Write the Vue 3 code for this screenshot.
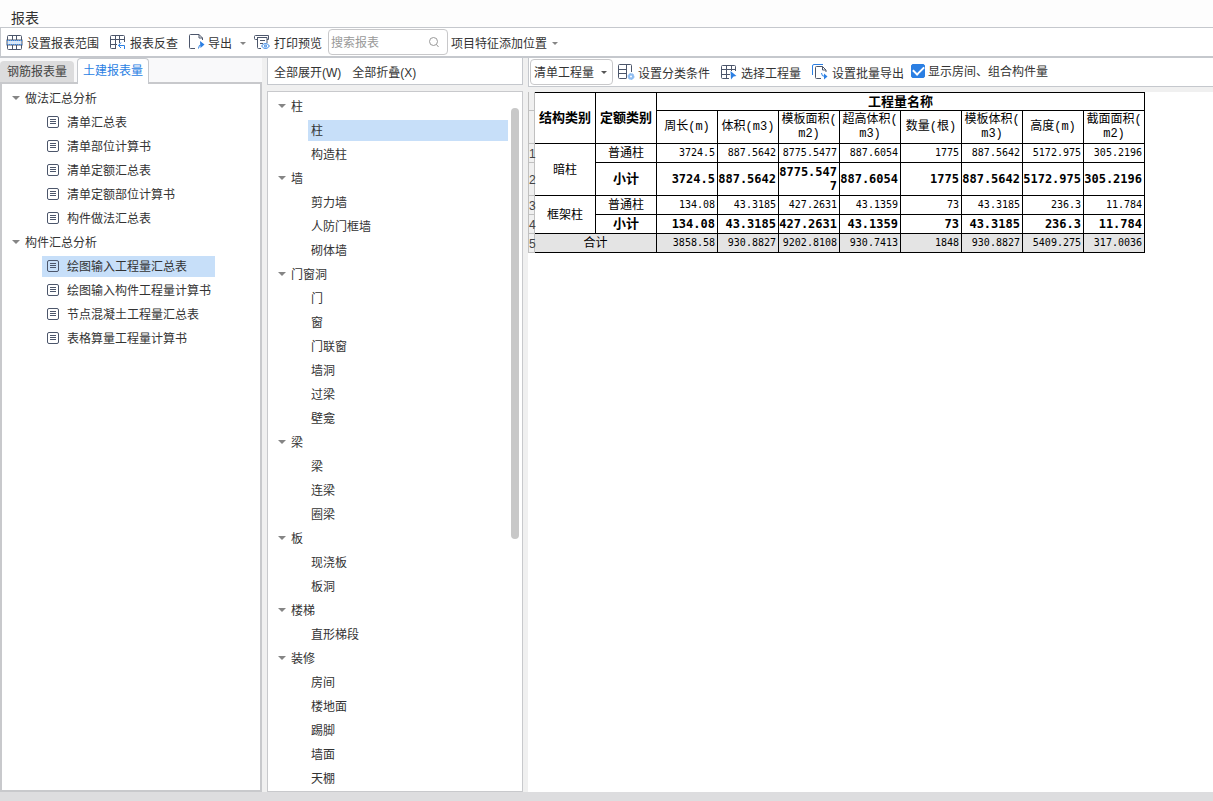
<script setup>
import { ref } from 'vue'

const reports = [
  { name: '做法汇总分析', items: ['清单汇总表', '清单部位计算书', '清单定额汇总表', '清单定额部位计算书', '构件做法汇总表'] },
  { name: '构件汇总分析', items: ['绘图输入工程量汇总表', '绘图输入构件工程量计算书', '节点混凝土工程量汇总表', '表格算量工程量计算书'] },
]
const components = [
  { name: '柱', items: ['柱', '构造柱'] },
  { name: '墙', items: ['剪力墙', '人防门框墙', '砌体墙'] },
  { name: '门窗洞', items: ['门', '窗', '门联窗', '墙洞', '过梁', '壁龛'] },
  { name: '梁', items: ['梁', '连梁', '圈梁'] },
  { name: '板', items: ['现浇板', '板洞'] },
  { name: '楼梯', items: ['直形梯段'] },
  { name: '装修', items: ['房间', '楼地面', '踢脚', '墙面', '天棚'] },
]
const activeReport = ref('绘图输入工程量汇总表')
const activeComponent = ref('柱/柱')
const keyword = ref('')
const showRooms = ref(true)

const columns = ['周长(m)', '体积(m3)', '模板面积(\nm2)', '超高体积(\nm3)', '数量(根)', '模板体积(\nm3)', '高度(m)', '截面面积(\nm2)']
const rows = [
  { group: '暗柱', kind: '普通柱', values: ['3724.5', '887.5642', '8775.5477', '887.6054', '1775', '887.5642', '5172.975', '305.2196'] },
  { kind: '小计', sub: true, tall: true, values: ['3724.5', '887.5642', '8775.5477', '887.6054', '1775', '887.5642', '5172.975', '305.2196'] },
  { group: '框架柱', kind: '普通柱', values: ['134.08', '43.3185', '427.2631', '43.1359', '73', '43.3185', '236.3', '11.784'] },
  { kind: '小计', sub: true, values: ['134.08', '43.3185', '427.2631', '43.1359', '73', '43.3185', '236.3', '11.784'] },
  { total: '合计', values: ['3858.58', '930.8827', '9202.8108', '930.7413', '1848', '930.8827', '5409.275', '317.0036'] },
]
</script>

<template>
  <div class="window">
    <header class="titlebar">报表</header>

    <div class="toolbar">
      <button class="tool range">
        <svg class="icon" viewBox="0 0 16 16"><rect x="1" y="6" width="15" height="5" fill="#d6e8fb" /><path d="M1.500 6V2.500Q1.500 1.500 2.500 1.500H14.500Q15.500 1.500 15.500 2.500V6M1.500 11V14.500Q1.500 15.500 2.500 15.500H14.500Q15.500 15.500 15.500 14.500V11M6.500 1.500V6M10.500 1.500V6M6.500 11V15.500M10.500 11V15.500" /><path class="blue" stroke-dasharray="1 1" d="M1 6.500H16M1 10.500H16" /></svg>
        <span>设置报表范围</span>
      </button>
      <button class="tool trace">
        <svg class="icon" viewBox="0 0 16 16"><path d="M15.500 8V2.500Q15.500 1.500 14.500 1.500H2.500Q1.500 1.500 1.500 2.500V13.500Q1.500 14.500 2.500 14.500H7M1.500 5.500H15.500M1.500 10.500H8M6.500 1.500V14.500M10.500 1.500V9" /><path class="blue" d="M15.500 15V11.500H9.500M12 8.500L9.500 11.500L12 14" /></svg>
        <span>报表反查</span>
      </button>
      <button class="tool export">
        <svg class="icon" viewBox="0 0 16 16"><path d="M7 14.500H2.500Q1.500 14.500 1.500 13.500V1.500Q1.500 .5 2.500 .5H11L14.500 4V6M11 .5V4H14.500" /><path class="blue" d="M10.500 14.500Q10.500 10.500 14 10.500" /><path class="solid" d="M12 7L16.500 10.500L12.500 14Z" /></svg>
        <span>导出</span>
        <i class="caret small"></i>
      </button>
      <button class="tool preview">
        <svg class="icon" viewBox="0 0 16 16"><path d="M3 5.500H1.500Q.5 5.500 .5 4.500V2.500Q.5 1.500 1.500 1.500H14.500V5.500H13M3 3.500H13V9M3.500 3.500V13.500Q3.500 14.500 4.500 14.500H7M6 6.500H11M6 9.500H9" /><path class="blue" d="M7.500 12Q11.500 7 15.500 12Q11.500 17 7.500 12Z" /><circle class="blue" cx="11.500" cy="12" r="1" /></svg>
        <span>打印预览</span>
      </button>
      <label class="search">
        <input v-model="keyword" type="text" placeholder="搜索报表" aria-label="搜索报表" />
        <svg viewBox="0 0 12 12"><circle cx="5.500" cy="5.500" r="4" /><path d="M8.500 8.500L10.500 11" /></svg>
      </label>
      <button class="tool place"><span>项目特征添加位置</span><i class="caret small"></i></button>
    </div>

    <main class="body">
      <section class="left">
        <div class="tabs" role="tablist">
          <button role="tab" aria-selected="false" class="tab">钢筋报表量</button>
          <button role="tab" aria-selected="true" class="tab active">土建报表量</button>
        </div>
        <nav class="reports">
          <template v-for="g in reports" :key="g.name">
            <button class="node"><i class="caret"></i>{{ g.name }}</button>
            <button v-for="r in g.items" :key="r" class="leaf" :class="{ selected: r === activeReport }" @click="activeReport = r">
              <svg viewBox="0 0 12 12"><rect x=".5" y=".5" width="11" height="11" rx="1.500" /><path d="M3 3.500H9M3 5.500H9M3 7.500H9" /></svg>
              <span>{{ r }}</span>
            </button>
          </template>
        </nav>
      </section>

      <section class="middle">
        <div class="fold">
          <button>全部展开(W)</button>
          <button>全部折叠(X)</button>
        </div>
        <nav class="components">
          <template v-for="g in components" :key="g.name">
            <button class="node"><i class="caret"></i>{{ g.name }}</button>
            <button v-for="c in g.items" :key="c" class="leaf" :class="{ selected: g.name + '/' + c === activeComponent }" @click="activeComponent = g.name + '/' + c">{{ c }}</button>
          </template>
          <div class="thumb"></div>
        </nav>
      </section>

      <section class="right">
        <div class="options">
          <div class="picker">
            <select aria-label="工程量类型"><option>清单工程量</option></select>
            <i class="caret small"></i>
          </div>
          <button class="tool">
            <svg class="icon" viewBox="0 0 16 16"><path d="M8 14.500H1.500Q.5 14.500 .5 13.500V1.500Q.5 .5 1.500 .5H12.500Q13.500 .5 13.500 1.500V8M.5 5.500H8M.5 9.500H8M8.500 .5V14.500" /><circle class="gear" cx="13" cy="12.500" r="3" /><circle class="hub" cx="13" cy="12.500" r="1" /></svg>
            <span>设置分类条件</span>
          </button>
          <button class="tool">
            <svg class="icon" viewBox="0 0 16 16"><path d="M14.500 7V2.500Q14.500 1.500 13.500 1.500H1.500Q.5 1.500 .5 2.500V13.500Q.5 14.500 1.500 14.500H8M.5 5.500H14.500M.5 10.500H9M5.500 1.500V14.500M10.500 1.500V7" /><path class="solid" d="M9.500 7L15.500 12L12.500 12.500L10 15.500Z" /></svg>
            <span>选择工程量</span>
          </button>
          <button class="tool">
            <svg class="icon" viewBox="0 0 16 16"><path class="blue" d="M.5 11V2Q.5 .5 2 .5H11" /><path d="M9 14.500H4.500Q3.500 14.500 3.500 13.500V3.500Q3.500 2.500 4.500 2.500H10.500L14 6V8M10.500 2.500V6H14" /><path class="blue" d="M9.500 9Q9.500 12.500 13 12.500" /><path class="solid" d="M12 9.500L15.500 12.500L12 15.500Z" /></svg>
            <span>设置批量导出</span>
          </button>
          <label class="check"><input v-model="showRooms" type="checkbox" /><span>显示房间、组合构件量</span></label>
        </div>

        <div class="viewport">
          <table class="sheet">
            <colgroup><col class="gutter" /><col v-for="n in 10" :key="n" class="cell" /></colgroup>
            <thead>
              <tr class="r19">
                <td class="num"></td>
                <th rowspan="2">结构类别</th>
                <th rowspan="2">定额类别</th>
                <th colspan="8">工程量名称</th>
              </tr>
              <tr class="r33">
                <td class="num"></td>
                <th v-for="c in columns" :key="c" class="unit">{{ c }}</th>
              </tr>
            </thead>
            <tbody>
              <tr v-for="(r, i) in rows" :key="i" :class="[r.tall ? 'r33' : 'r19', { sub: r.sub, total: r.total }]">
                <td class="num">{{ i + 1 }}</td>
                <td v-if="r.group" rowspan="2" class="name">{{ r.group }}</td>
                <td v-if="r.kind" class="name">{{ r.kind }}</td>
                <td v-if="r.total" colspan="2" class="name">{{ r.total }}</td>
                <td v-for="(v, j) in r.values" :key="j" class="val">{{ v }}</td>
              </tr>
            </tbody>
          </table>
        </div>
      </section>
    </main>
    <footer class="status"></footer>
  </div>
</template>

<style>
html, body { margin: 0; background: #fff; }
</style>

<style scoped>
* { box-sizing: border-box; }
.window {
  display: flex; flex-direction: column; min-height: 100vh;
  font: 12px/16px "Liberation Sans", "Noto Sans CJK SC", sans-serif; color: #333; background: #f0f0f0;
}
button { border: 0; background: none; padding: 0; margin: 0; font: inherit; color: inherit; text-align: left; white-space: nowrap; }
.titlebar { height: 28px; padding: 8px 0 0 11px; font-size: 14px; line-height: 20px; background: #fdfdfd; border-bottom: 1px solid #c5c8cd; }
.toolbar { display: flex; align-items: center; height: 30px; padding-left: 5px; background: #fff; border-left: 1px solid #c5c8cd; border-bottom: 2px solid #c5c8cd; }
.tool { display: flex; align-items: center; gap: 5px; flex: none; }
.tool span { padding-top: 3px; }
.toolbar .tool { margin-right: 10px; }
.toolbar .export { gap: 4px; margin-right: 8px; }
.toolbar .preview { gap: 4px; margin-right: 6px; }
.icon { width: 16px; height: 16px; fill: none; stroke: #4c566b; stroke-width: 1; overflow: visible; }
.icon .blue { stroke: #2b7fe3; }
.icon .solid { fill: #2b7fe3; stroke: none; }
.icon .gear { fill: #8fbcf0; stroke: #8fbcf0; stroke-dasharray: 2 1; }
.icon .hub { fill: #fff; stroke: none; }
.caret { display: block; width: 0; height: 0; border: solid transparent; border-width: 4px 4px 0; border-top-color: #858585; flex: none; }
.caret.small { border-width: 3px 3px 0; border-top-color: #858585; margin: 2px 0 0 4px; }
.search { display: flex; align-items: center; width: 120px; height: 26px; padding: 0 7px 0 2px; border: 1px solid #c8c8ca; border-radius: 4px; background: #fff; margin-right: 3px; flex: none; }
.search input { flex: 1; min-width: 0; border: 0; outline: 0; padding: 2px 0 0; font: inherit; background: none; color: #333; }
.search input::placeholder { color: #999; opacity: 1; }
.search svg { width: 12px; height: 12px; fill: none; stroke: #999; }
.toolbar .place { gap: 1px; margin: 0; }

.body { flex: 1; display: flex; gap: 5px; }
.left { width: 262px; flex: none; display: flex; flex-direction: column; background: #f9f9fa; }
.tabs { display: flex; align-items: flex-end; gap: 3px; height: 24px; }
.tab { height: 21px; width: 74px; text-align: center; background: #dcdcdd; border-radius: 4px 4px 0 0; color: #444; }
.tab.active { height: 26px; width: 72px; margin-bottom: -2px; padding-bottom: 1px; background: #fff; border: 1px solid #c5c8cd; border-bottom: 0; color: #2b7fe3; z-index: 1; }
.reports, .components { display: flex; flex-direction: column; align-items: flex-start; flex: 1; background: #fff; }
.reports { padding-top: 2px; border: 2px solid #c8c9cc; }
.node { display: flex; align-items: center; height: 24px; flex: none; gap: 5px; padding-top: 2px; }
.node .caret { margin-bottom: 2px; }
.leaf { flex: none; height: 21px; margin: 2px 0 1px 40px; padding-top: 1px; }
.reports .node { padding-left: 10px; }
.reports .leaf { display: flex; align-items: center; gap: 8px; padding-left: 5px; padding-right: 4px; }
.reports .leaf.selected { padding-right: 28px; }
.reports .leaf svg { width: 12px; height: 12px; margin-bottom: 3px; fill: none; stroke: #4c566b; }
.selected { background: #c7dff9; }

.middle { width: 256px; flex: none; display: flex; flex-direction: column; gap: 6px; }
.fold { display: flex; gap: 11px; height: 27px; padding: 0 6px; background: #fff; border: 1px solid #c5c8cd; border-top: 0; }
.fold button { padding-top: 3px; }
.components { position: relative; padding-top: 2px; border: 1px solid #c8c9cc; }
.components .node { padding-left: 10px; }
.components .leaf { width: 200px; padding-left: 3px; }
.thumb { position: absolute; right: 3px; top: 16px; width: 8px; height: 431px; border-radius: 4px; background: #c8c8c8; }

.right { flex: 1; min-width: 0; background: #fff; }
.options { display: flex; align-items: center; gap: 10px; height: 29px; padding-left: 1px; border-left: 1px solid #c5c8cd; border-bottom: 1px solid #c5c8cd; }
.options .tool { gap: 4px; margin-right: 1px; }
.picker { position: relative; width: 83px; height: 26px; margin-right: -5px; flex: none; }
.picker select { appearance: none; width: 100%; height: 100%; padding: 2px 0 0 3px; border: 1px solid #c8c8ca; border-radius: 4px; background: #fff; font: inherit; color: inherit; }
.picker .caret { position: absolute; right: 6px; top: 10px; border-top-color: #555; }
.check { display: flex; align-items: center; gap: 3px; margin-left: -4px; white-space: nowrap; }
.check input { appearance: none; width: 14px; height: 14px; margin: 0 0 2px; border-radius: 2px; border: 1px solid #2b7fe3; display: grid; place-items: center; }
.check input:checked { background: #2b7fe3; }
.check input:checked::after { content: ""; width: 9px; height: 5px; border: solid #fff; border-width: 0 0 2px 2px; transform: rotate(-45deg); margin-bottom: 3px; }

.viewport { border-top: 5px solid #f0f0f0; overflow-x: auto; }
.sheet { table-layout: fixed; width: 617px; border-collapse: separate; border-spacing: 0; color: #000; }
.gutter { width: 7px; }
.cell { width: 61px; }
.sheet th, .sheet td { padding: 0; border-right: 1px solid #000; border-bottom: 1px solid #000; }
.sheet thead tr:first-child > * { border-top: 1px solid #000; }
.sheet th { font-size: 13px; line-height: 16px; font-weight: bold; text-align: center; }
.sheet th.unit { font: 12px/14px "Liberation Mono", "Noto Sans CJK SC", monospace; white-space: pre-line; }
.sheet td.num, .sheet thead tr:first-child > td.num { border: 1px solid #c0c0c0; border-top-width: 0; background: #f0f0f0; font-size: 12px; color: #444; line-height: 14px; }
.sheet tbody td.num { padding-top: 2px; }
.r19 { height: 19px; }
.r33 { height: 33px; }
.sheet .name { text-align: center; line-height: 14px; }
.sheet .val { text-align: right; padding-right: 2px; font: 10px/14px "DejaVu Sans Mono", monospace; word-break: break-all; }
.sheet .sub .name { font-weight: bold; font-size: 13px; }
.sheet .sub .val { font-size: 12px; font-weight: bold; }
.total > .name, .total > .val { background: #e4e4e4; }
.status { height: 9px; background: #dddddf; }
</style>
